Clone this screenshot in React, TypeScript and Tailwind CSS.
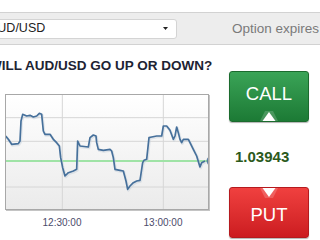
import React from "react";

const pts: [number, number][] = [
  [17, 165], [25, 175], [35, 190], [55, 188], [60, 180], [63, 120], [68, 100], [80, 105], [90, 103],
  [100, 108], [110, 105], [118, 97], [125, 100], [130, 150], [135, 160], [150, 160], [160, 175],
  [170, 185], [178, 195], [182, 230], [188, 260], [195, 285], [205, 275], [220, 270], [230, 265],
  [233, 180], [240, 195], [265, 198], [270, 170], [280, 162], [288, 165], [290, 185], [295, 205],
  [310, 208], [330, 205], [335, 210], [340, 230], [345, 265], [360, 268], [370, 270], [378, 300],
  [383, 325], [390, 315], [400, 305], [410, 300], [420, 298], [428, 245], [432, 238], [440, 235],
  [447, 170], [455, 168], [470, 165], [485, 165], [490, 135], [500, 135], [510, 148], [520, 175],
  [525, 165], [530, 138], [535, 155], [540, 175], [545, 185], [550, 175], [565, 175], [570, 185],
  [580, 205], [590, 225], [600, 258], [605, 245], [615, 240],
];

function Chart() {
  const d = pts.map((p, i) => (i === 0 ? "M" : "L") + p[0] + " " + p[1]).join(" ");
  return (
    <div className="relative ml-[5px] mt-[21px] w-[204px]">
      <div className="h-[116px] w-[204px] border border-[#a8a8a8] bg-linear-to-b from-white to-[#ebebeb] shadow-[1px_1px_0_#c4c4c4]">
        <svg width="202" height="114" viewBox="18 42 606 342" className="block">
          {[110, 181, 240, 318].map((y) => (
            <line key={y} x1="0" x2="700" y1={y} y2={y} stroke="#d6d6d6" strokeWidth="3" />
          ))}
          {[187, 490].map((x) => (
            <line key={x} x1={x} x2={x} y1="0" y2="400" stroke="#d6d6d6" strokeWidth="3" />
          ))}
          <line x1="0" x2="700" y1="240" y2="240" stroke="#9fe3a6" strokeWidth="6" />
          <path d={d} fill="none" stroke="#c8d2dc" strokeWidth="8" strokeLinejoin="round" opacity="0.5" transform="translate(2 3)" />
          <path d={d} fill="none" stroke="#46709b" strokeWidth="5" strokeLinejoin="round" />
          <path d="M 634 228 A 12 12 0 1 0 634 252" fill="none" stroke="#46709b" strokeWidth="5" opacity="0.85" />
        </svg>
      </div>
      <span className="absolute top-[123px] left-[57px] -translate-x-1/2 text-[10px] leading-[12px] text-[#4b4b6b]">12:30:00</span>
      <span className="absolute top-[123px] left-[158px] -translate-x-1/2 text-[10px] leading-[12px] text-[#4b4b6b]">13:00:00</span>
    </div>
  );
}

export default function App() {
  return (
    <div className="w-[320px] h-[240px] overflow-hidden bg-white font-['Liberation_Sans',Arial,sans-serif]">
      <div className="h-[12px]" />
      <div className="flex h-[33px] items-center border-y border-[#d2d2d2] bg-[#ededed]">
        <div className="ml-[-20px] flex h-[20px] w-[197px] shrink-0 items-center justify-between rounded-[3px] border border-[#d4d4d4] bg-white pl-[8px] pr-[8px]">
          <span className="text-[12.5px] leading-none text-[#222]">AUD/USD</span>
          <svg width="5" height="3" viewBox="0 0 5 3">
            <path d="M0 0 H5 L2.5 3 Z" fill="#222" />
          </svg>
        </div>
        <span className="ml-[55px] whitespace-nowrap text-[13.5px] leading-none text-[#7a7a7a]">Option expires</span>
      </div>
      <div className="flex">
        <div className="w-[222px] shrink-0">
          <div className="ml-[-11px] mt-[13px] whitespace-nowrap text-[13.5px] font-bold leading-[15px] text-[#1d2333]">
            WILL AUD/USD GO UP OR DOWN?
          </div>
          <Chart />
        </div>
        <div className="ml-[7px] flex flex-col">
          <div className="relative mt-[26px] flex h-[51px] w-[80px] items-center justify-center rounded-[3px] border border-[#1b6b2e] bg-linear-to-b from-[#3aa457] to-[#1c7a35] shadow-[0_1px_1px_rgba(0,0,0,0.3)]">
            <span className="mt-[-4px] text-[18.5px] leading-none text-white">CALL</span>
            <svg className="absolute bottom-0 left-1/2 -translate-x-1/2" width="26" height="12" viewBox="0 0 26 12">
              <path d="M4 12 L9 2 H17 L22 12 Z" fill="white" opacity="0.18" />
              <path d="M6.5 12 L13 3 L19.5 12 Z" fill="white" />
            </svg>
          </div>
          <div className="ml-[6px] mt-[27px] text-[15px] font-bold leading-[16px] text-[#2b5a1c]">1.03943</div>
          <div className="relative mt-[22px] flex h-[51px] w-[80px] items-center justify-center rounded-[3px] border border-[#b51a1e] bg-linear-to-b from-[#f0403f] to-[#cc1b20] shadow-[0_1px_1px_rgba(0,0,0,0.3)]">
            <span className="mt-[6px] text-[18.5px] leading-none text-white">PUT</span>
            <svg className="absolute top-0 left-1/2 -translate-x-1/2" width="26" height="12" viewBox="0 0 26 12">
              <path d="M4 0 L9 10 H17 L22 0 Z" fill="white" opacity="0.18" />
              <path d="M6.5 0 L13 9 L19.5 0 Z" fill="white" />
            </svg>
          </div>
        </div>
      </div>
    </div>
  );
}
